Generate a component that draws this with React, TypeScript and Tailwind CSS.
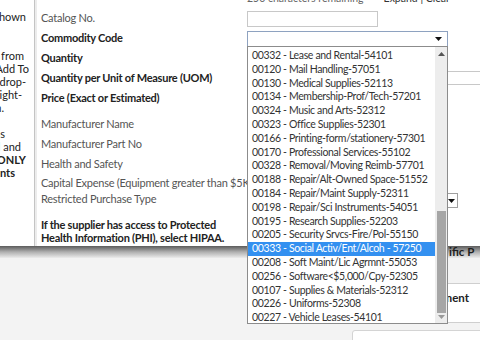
import React from 'react';

const commodityCodes = [
  '00332 - Lease and Rental-54101',
  '00120 - Mail Handling-57051',
  '00130 - Medical Supplies-52113',
  '00134 - Membership-Prof/Tech-57201',
  '00324 - Music and Arts-52312',
  '00323 - Office Supplies-52301',
  '00166 - Printing-form/stationery-57301',
  '00170 - Professional Services-55102',
  '00328 - Removal/Moving Reimb-57701',
  '00188 - Repair/Alt-Owned Space-51552',
  '00184 - Repair/Maint Supply-52311',
  '00198 - Repair/Sci Instruments-54051',
  '00195 - Research Supplies-52203',
  '00205 - Security Srvcs-Fire/Pol-55150',
  '00333 - Social Activ/Ent/Alcoh - 57250',
  '00208 - Soft Maint/Lic Agrmnt-55053',
  '00256 - Software<$5,000/Cpy-52305',
  '00107 - Supplies & Materials-52312',
  '00226 - Uniforms-52308',
  '00227 - Vehicle Leases-54101',
];

const selected = '00333 - Social Activ/Ent/Alcoh - 57250';

const Arrow: React.FC<{ up?: boolean; className?: string }> = ({ up, className }) => (
  <svg width="7" height="4" viewBox="0 0 7 4" className={className}>
    <path d={up ? 'M0 4 L3.5 0 L7 4 Z' : 'M0 0 L7 0 L3.5 4 Z'} fill="currentColor" />
  </svg>
);

const App: React.FC = () => {
  return (
    <div className="relative h-[340px] w-[480px] overflow-hidden bg-[#f3f3f3] font-['Lato',sans-serif] text-[11px] text-[#222]">
      {/* dialog */}
      <div className="flex h-[246px] bg-white">
        {/* help text, clipped on the left */}
        <div className="w-[34px] shrink-0 overflow-hidden pt-[10px] text-[11px] leading-[13px] text-[#222]">
          <div className="flex justify-end whitespace-nowrap pr-[8px]">items are shown</div>
          <div className="mt-[26px]">
            <div className="flex justify-end whitespace-nowrap pr-[10px]">select from</div>
            <div className="flex justify-end whitespace-nowrap pr-[5px]">click Add To</div>
            <div className="flex justify-end whitespace-nowrap pr-[8px]">the drop-</div>
            <div className="flex justify-end whitespace-nowrap pr-[12px]">right-</div>
            <div className="flex justify-end whitespace-nowrap pr-[30px]">on.</div>
          </div>
          <div className="mt-[13px]">
            <div className="flex justify-end whitespace-nowrap pr-[29px]">items</div>
            <div className="flex justify-end whitespace-nowrap pr-[13px]">email and</div>
            <div className="flex justify-end whitespace-nowrap pr-[8px] font-bold">ONLY</div>
            <div className="flex justify-end whitespace-nowrap pr-[19px] font-bold">ents</div>
          </div>
        </div>

        {/* divider */}
        <div className="w-[3px] shrink-0 border-l border-[#c4c4c4] bg-[#ececec]" />

        {/* form */}
        <div className="flex min-w-0 flex-1 pl-[4px]">
          <div className="w-[206px] shrink-0 pt-[8px] tracking-[-0.25px] whitespace-nowrap">
            <div className="flex h-[20px] items-center text-[#555]">Catalog No.</div>
            <div className="flex h-[20px] items-center font-bold">Commodity Code</div>
            <div className="flex h-[20px] items-center font-bold">Quantity</div>
            <div className="flex h-[20px] items-center font-bold">Quantity per Unit of Measure (UOM)</div>
            <div className="flex h-[20px] items-center font-bold">Price (Exact or Estimated)</div>
            <div className="mt-[6px] text-[#555]">
              <div className="flex h-[20px] items-center">Manufacturer Name</div>
              <div className="flex h-[20px] items-center">Manufacturer Part No</div>
              <div className="flex h-[20px] items-center">Health and Safety</div>
              <div className="flex h-[18px] items-center">Capital Expense (Equipment greater than $5K)</div>
              <div className="flex h-[14px] items-center">Restricted Purchase Type</div>
            </div>
            <p className="mt-[12px] leading-[13px] font-bold">
              If the supplier has access to Protected
              <br />
              Health Information (PHI), select HIPAA.
            </p>
          </div>

          <div className="flex min-w-0 flex-1 flex-col">
            <div className="-mt-[8px] flex h-[13px] items-center gap-[20px] whitespace-nowrap text-[10.5px]">
              <span className="text-[#666]">250 characters remaining</span>
              <span className="text-[#333]">Expand | Clear</span>
            </div>
            <div className="mt-[6px] h-[16px] w-[131px] border border-[#c8c8c8] bg-white" />
            <div className="mt-[4px] flex h-[16px] w-[201px] items-center justify-end border border-[#8ea2c0] bg-white pr-[5px]">
              <Arrow className="text-[#111]" />
            </div>
            <div className="mt-[24px] h-[14px] w-[260px] border border-[#c8c8c8] bg-white" />
            <div className="mt-[108px] flex h-[15px] w-[211px] items-center justify-end border border-[#a0a0a0] bg-white pr-[2px]">
              <Arrow className="text-[#111]" />
            </div>
          </div>
        </div>
      </div>

      {/* dialog bottom edge over the page header */}
      <div className="h-[12px] bg-linear-to-b from-[#5c5c5c] via-[#b0b0b0] to-[#ececec] pl-[449px] text-[11.5px] leading-[12px] font-bold whitespace-nowrap text-[#1e1e1e]">
        ific P
      </div>

      {/* page behind the dialog */}
      <div className="pt-[25px]">
        <div className="ml-[340px] flex h-[40px] w-[150px] justify-end rounded-tl-[3px] border border-[#cfcfcf] bg-white pt-[7px] pr-[20px] text-[11.5px] leading-[14px] font-bold text-[#222]">
          Equipment
        </div>
        <div className="mt-[7px] ml-[352px] h-[20px] w-[140px] rounded-tl-[3px] border border-[#d4d4d4] bg-white" />
      </div>

      {/* open commodity code list */}
      <div className="absolute top-[46px] left-[247px] flex h-[278px] w-[201px] border border-[#8c8c8c] bg-white">
        <ul className="min-w-0 flex-1 overflow-hidden pt-[2px] text-[10.5px] leading-[13.8px] tracking-[-0.35px] text-[#333]">
          {commodityCodes.map(code => (
            <li
              key={code}
              className={
                code === selected
                  ? 'h-[13.8px] whitespace-nowrap bg-[#3390f0] pl-[4px] text-white'
                  : 'h-[13.8px] whitespace-nowrap pl-[4px]'
              }
            >
              {code}
            </li>
          ))}
        </ul>
        <div className="relative w-[12px] shrink-0 bg-[#ededed]">
          <div className="flex h-[14px] items-center justify-center text-[#555]">
            <Arrow up />
          </div>
          <div className="absolute top-[164px] right-[1px] left-[2px] h-[102px] bg-[#a6a6a6]" />
          <div className="absolute right-0 bottom-0 left-0 flex h-[12px] items-center justify-center text-[#999]">
            <Arrow />
          </div>
        </div>
      </div>
    </div>
  );
};

export default App;
